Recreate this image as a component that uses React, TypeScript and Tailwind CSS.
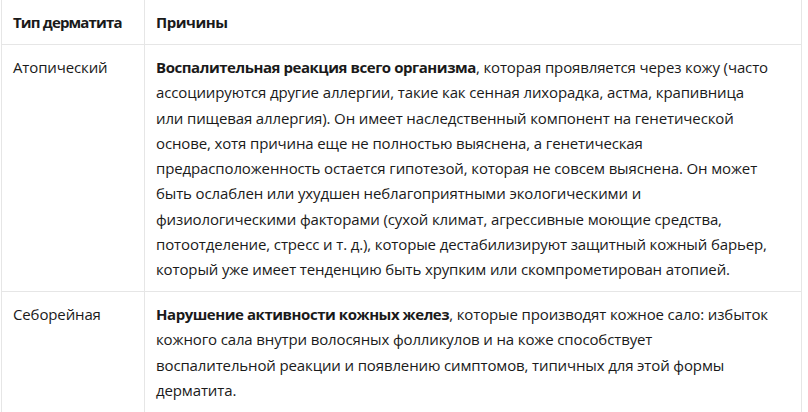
import React from "react";

const B = ({ children, tight }: { children: React.ReactNode; tight?: boolean }) => (
  <b className={tight ? "font-bold tracking-[-0.85px]" : "font-bold tracking-[-0.45px]"}>{children}</b>
);

const row1 = [
  <><B>Воспалительная реакция всего организма</B>, которая проявляется через кожу (часто</>,
  "ассоциируются другие аллергии, такие как сенная лихорадка, астма, крапивница",
  "или пищевая аллергия). Он имеет наследственный компонент на генетической",
  "основе, хотя причина еще не полностью выяснена, а генетическая",
  "предрасположенность остается гипотезой, которая не совсем выяснена. Он может",
  "быть ослаблен или ухудшен неблагоприятными экологическими и",
  "физиологическими факторами (сухой климат, агрессивные моющие средства,",
  "потоотделение, стресс и т. д.), которые дестабилизируют защитный кожный барьер,",
  "который уже имеет тенденцию быть хрупким или скомпрометирован атопией.",
];

const row2 = [
  <><B>Нарушение активности кожных желез</B>, которые производят кожное сало: избыток</>,
  "кожного сала внутри волосяных фолликулов и на коже способствует",
  "воспалительной реакции и появлению симптомов, типичных для этой формы",
  "дерматита.",
];

function Lines({ lines }: { lines: React.ReactNode[] }) {
  return (
    <div className="flex flex-col">
      {lines.map((l, i) => (
        <div key={i} className="whitespace-nowrap h-[25.25px] leading-[25.25px]">
          {l}
        </div>
      ))}
    </div>
  );
}

export default function App() {
  return (
    <div
      className="w-[808px] h-[412px] overflow-hidden bg-white text-[15px] text-[#1a1a1a] tracking-[-0.13px]"
      style={{ fontFamily: '"Open Sans", sans-serif' }}
    >
      <div className="ml-px w-[801px] border-x border-[#e6e6e6]">
        <div className="grid grid-cols-[143px_1fr] border-b border-[#e6e6e6] h-[45px]">
          <div className="border-r border-[#e6e6e6] pl-[11px] flex items-center"><B tight>Тип дерматита</B></div>
          <div className="pl-[11px] flex items-center"><B>Причины</B></div>
        </div>
        <div className="grid grid-cols-[143px_1fr] border-b border-[#e6e6e6] h-[247px]">
          <div className="border-r border-[#e6e6e6] pl-[11px] pt-[10px]">
            <Lines lines={["Атопический"]} />
          </div>
          <div className="pl-[11px] pt-[10px]">
            <Lines lines={row1} />
          </div>
        </div>
        <div className="grid grid-cols-[143px_1fr] h-[130px]">
          <div className="border-r border-[#e6e6e6] pl-[11px] pt-[10px]">
            <Lines lines={["Себорейная"]} />
          </div>
          <div className="pl-[11px] pt-[10px]">
            <Lines lines={row2} />
          </div>
        </div>
      </div>
    </div>
  );
}
